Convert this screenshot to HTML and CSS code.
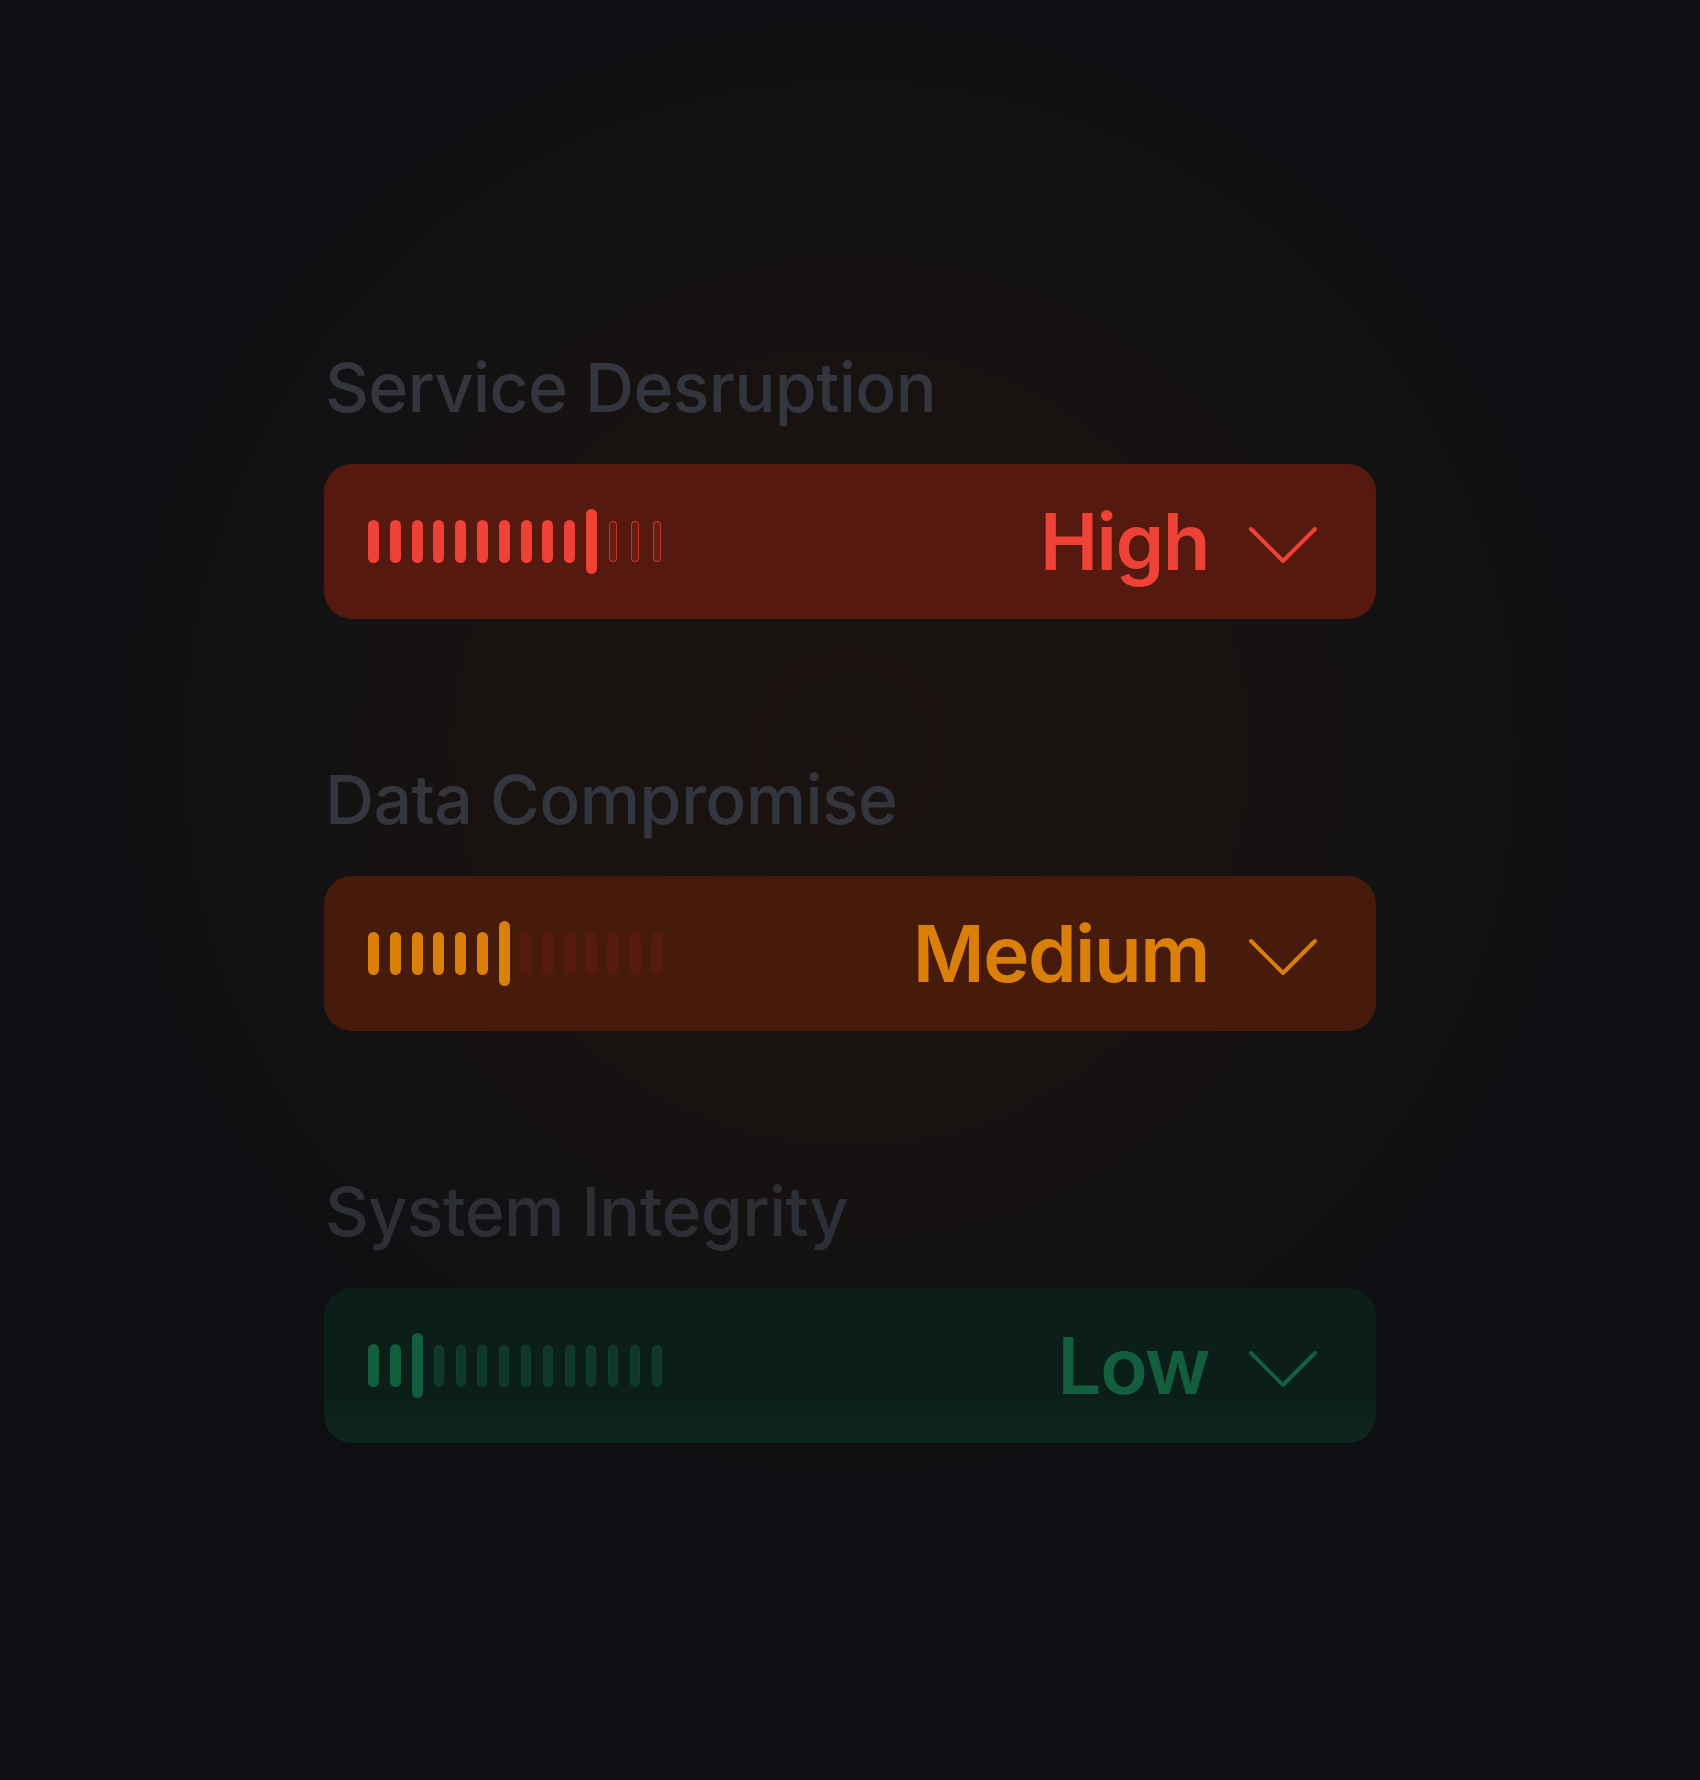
FILE: index.html
```html
<!DOCTYPE html>
<html lang="en">
<head>
<meta charset="UTF-8">
<meta name="viewport" content="width=device-width, initial-scale=1.0">
<title>Risk Levels</title>
<link rel="stylesheet" href="styles.css">
</head>
<body>
    <main class="panel">
        <section class="field">
            <div class="field-label">Service Desruption</div>
            <div class="select select-high">
                <div class="meter">
                    <span class="tick"></span><span class="tick"></span><span class="tick"></span><span class="tick"></span><span class="tick"></span>
                    <span class="tick"></span><span class="tick"></span><span class="tick"></span><span class="tick"></span><span class="tick"></span>
                    <span class="tick tall"></span>
                    <span class="tick off"></span><span class="tick off"></span><span class="tick off"></span>
                </div>
                <span class="value">High</span>
                <svg class="chevron" width="72" height="40" viewBox="0 0 72 40"><path d="M4 4 L36 36 L68 4"/></svg>
            </div>
        </section>

        <section class="field">
            <div class="field-label">Data Compromise</div>
            <div class="select select-medium">
                <div class="meter">
                    <span class="tick"></span><span class="tick"></span><span class="tick"></span>
                    <span class="tick"></span><span class="tick"></span><span class="tick"></span>
                    <span class="tick tall"></span>
                    <span class="tick off"></span><span class="tick off"></span><span class="tick off"></span><span class="tick off"></span>
                    <span class="tick off"></span><span class="tick off"></span><span class="tick off"></span>
                </div>
                <span class="value">Medium</span>
                <svg class="chevron" width="72" height="40" viewBox="0 0 72 40"><path d="M4 4 L36 36 L68 4"/></svg>
            </div>
        </section>

        <section class="field field-faded">
            <div class="field-label">System Integrity</div>
            <div class="select select-low">
                <div class="meter">
                    <span class="tick"></span><span class="tick"></span>
                    <span class="tick tall"></span>
                    <span class="tick off"></span><span class="tick off"></span><span class="tick off"></span><span class="tick off"></span>
                    <span class="tick off"></span><span class="tick off"></span><span class="tick off"></span><span class="tick off"></span>
                    <span class="tick off"></span><span class="tick off"></span><span class="tick off"></span>
                </div>
                <span class="value">Low</span>
                <svg class="chevron" width="72" height="40" viewBox="0 0 72 40"><path d="M4 4 L36 36 L68 4"/></svg>
            </div>
        </section>
    </main>
</body>
</html>
```

FILE: styles.css
```css
body {
    margin: 0;
    padding: 0;
    min-height: 1780px;
    background-color: #0e0f13;
    background-image: radial-gradient(circle at 50% 42%, #1a1312 0, #181211 28%, #121113 45%, #0e0f13 62%);
    font-family: Inter, "Noto Sans", "Liberation Sans", sans-serif;
}

.panel {
    width: 1052px;
    margin: 0 auto;
    padding-top: 353px;
    display: flex;
    flex-direction: column;
    gap: 146px;
}

.field {
    display: flex;
    flex-direction: column;
    gap: 43px;
}

.field-label {
    font-size: 68px;
    line-height: 1;
    font-weight: 500;
    letter-spacing: -0.6px;
    color: #33363e;
    padding-left: 1px;
}

.field-faded .field-label {
    color: #2c2f35;
}

.select {
    height: 155px;
    border-radius: 28px;
    display: flex;
    align-items: center;
    padding: 0 57px 0 44px;
    background-color: var(--bg);
    color: var(--accent);
}

.select-high {
    --bg: #551910;
    --accent: #ef4237;
    --off-bg: rgba(239, 66, 55, 0.12);
    --off-line: rgba(239, 66, 55, 0.7);
}

.select-medium {
    --bg: #471b0c;
    --accent: #d97f0a;
    --off-bg: #561a10;
    --off-line: transparent;
}

.select-low {
    --bg: #0c1e19;
    --accent: #135e3f;
    --off-bg: rgba(19, 94, 63, 0.4);
    --off-line: rgba(19, 94, 63, 0.25);
    background-image: linear-gradient(to bottom, transparent 70%, rgba(19, 94, 63, 0.12));
}

.meter {
    display: flex;
    align-items: center;
    gap: 10.8px;
}

.tick {
    width: 11px;
    height: 43px;
    border-radius: 6px;
    background-color: var(--accent);
}

.tick.tall {
    height: 65px;
}

.tick.off {
    width: 8px;
    height: 41px;
    margin: 0 1.5px;
    border-radius: 5px;
    box-sizing: border-box;
    background-color: var(--off-bg);
    border: 1.5px solid var(--off-line);
}

.select-medium .tick.off {
    width: 12px;
    margin: 0 -0.5px;
    height: 43px;
}

.select-low .tick.off {
    width: 10px;
    margin: 0 0.5px;
    height: 42px;
}

.value {
    margin-left: auto;
    font-size: 78px;
    line-height: 1;
    font-weight: 600;
    letter-spacing: -1.5px;
}

.chevron {
    margin-left: 38px;
    margin-top: 6px;
    fill: none;
    stroke: var(--accent);
    stroke-width: 4;
    stroke-linecap: round;
    stroke-linejoin: round;
}
```
